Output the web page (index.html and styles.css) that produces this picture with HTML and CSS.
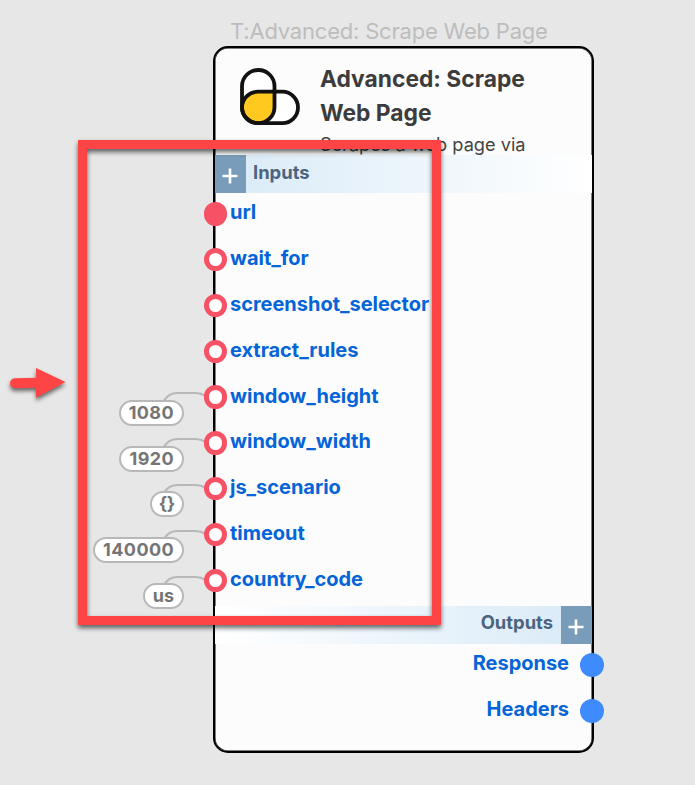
FILE: index.html
```html
<!DOCTYPE html>
<html lang="en">
<head>
<meta charset="utf-8">
<title>Advanced: Scrape Web Page</title>
<link rel="stylesheet" href="styles.css">
</head>
<body>
<main class="canvas">
  <div class="caption"><span>T:Advanced: Scrape Web Page</span></div>
  <section class="node">
    <header class="head">
      <svg class="logo" width="62" height="60" viewBox="0 0 62 60">
        <rect x="3" y="3" width="32.5" height="53" rx="16.25" fill="#fff"/>
        <rect x="3" y="24.7" width="56" height="31.5" rx="15.75" fill="#fff"/>
        <path d="M18.75 24.7H35.5V40A16 16 0 0 1 19.5 56.2H18.75A15.75 15.75 0 0 1 18.75 24.7Z" fill="#ffc91f"/>
        <rect x="3" y="3" width="32.5" height="53.2" rx="16.25" fill="none" stroke="#11110f" stroke-width="3.8"/>
        <rect x="3" y="24.7" width="56" height="31.5" rx="15.75" fill="none" stroke="#11110f" stroke-width="3.8"/>
      </svg>
      <div class="about">
        <h1>Advanced: Scrape<br>Web Page</h1>
        <p><span>Scrapes a web page via</span></p>
      </div>
    </header>
    <div class="band band-in">
      <button class="add"><svg width="16" height="16" viewBox="0 0 16 16"><path d="M.5 8h15M8 .5v15"/></svg></button>
      <h2>Inputs</h2>
    </div>
    <ul class="inputs">
      <li><i class="port filled"></i><span>url</span></li>
      <li><i class="port"></i><span>wait_for</span></li>
      <li><i class="port"></i><span>screenshot_selector</span></li>
      <li><i class="port"></i><span>extract_rules</span></li>
      <li><svg class="wire" width="46" height="16" viewBox="0 0 46 16"><path d="M1 15C6 9 8 5 17 5H34Q40 5 45 8"/></svg><b class="value number">1080</b><i class="port"></i><span>window_height</span></li>
      <li><svg class="wire" width="46" height="16" viewBox="0 0 46 16"><path d="M1 15C6 9 8 5 17 5H34Q40 5 45 8"/></svg><b class="value number">1920</b><i class="port"></i><span>window_width</span></li>
      <li><svg class="wire" width="46" height="16" viewBox="0 0 46 16"><path d="M1 15C6 9 8 5 17 5H34Q40 5 45 8"/></svg><b class="value braces">{}</b><i class="port"></i><span>js_scenario</span></li>
      <li><svg class="wire" width="46" height="16" viewBox="0 0 46 16"><path d="M1 15C6 9 8 5 17 5H34Q40 5 45 8"/></svg><b class="value number">140000</b><i class="port"></i><span>timeout</span></li>
      <li><svg class="wire" width="46" height="16" viewBox="0 0 46 16"><path d="M1 15C6 9 8 5 17 5H34Q40 5 45 8"/></svg><b class="value word">us</b><i class="port"></i><span>country_code</span></li>
    </ul>
    <div class="band band-out">
      <h2>Outputs</h2>
      <button class="add"><svg width="16" height="16" viewBox="0 0 16 16"><path d="M.5 8h15M8 .5v15"/></svg></button>
    </div>
    <ul class="outputs">
      <li><span>Response</span><i class="port"></i></li>
      <li><span>Headers</span><i class="port"></i></li>
    </ul>
  </section>
  <div class="highlight"></div>
  <svg class="arrow" width="70" height="46" viewBox="0 0 70 46">
    <path d="M15 18.2L36 17.8V8L65.5 22L36 37.8V27.8L15 28.2A5 5 0 0 1 15 18.2Z"/>
  </svg>
</main>
</body>
</html>
```
FILE: styles.css
```css
* { box-sizing: border-box; }
body { margin: 0; background: #e7e7e7; font-family: Inter, "Liberation Sans", sans-serif; }
h1, h2, p, ul { margin: 0; padding: 0; }
ul { list-style: none; }
.canvas { position: relative; width: 695px; height: 785px; overflow: hidden; padding: 16px 0 0 213px; }
.caption { height: 29.6px; padding-left: 17px; font-size: 22px; line-height: 30px; font-weight: 400; letter-spacing: -.2px; color: #bdbdbd; white-space: nowrap; }
.node { width: 381px; height: 707px; border: 2px solid #000; border-radius: 15px; background: #fcfcfc; box-shadow: inset 0 0 0 .5px #000; }
.head { display: flex; height: 107px; overflow: hidden; padding-left: 24px; }
.logo { flex: none; margin-top: 19px; }
.about { padding: 14px 0 0 19px; white-space: nowrap; color: #3c3c3c; }
h1 { font-size: 22.8px; line-height: 34px; font-weight: 700; }
p { font-size: 18.2px; line-height: 26px; padding-top: 1px; color: #444; }
.band { display: flex; height: 38px; }
.band-in { background: linear-gradient(90deg, #d8eaf7, #fff); }
.band-out { justify-content: flex-end; background: linear-gradient(90deg, #fff, #d8eaf7); }
.band h2 { padding: 0 8px 0 7px; font-size: 18.4px; line-height: 35px; font-weight: 700; color: #4b6480; }
.band-out h2 { line-height: 33px; }
.add { display: flex; align-items: center; justify-content: center; width: 31px; height: 38px; padding: 4px 1px 0 0; border: 0; background: #789cb9; }
.add path { stroke: #fff; stroke-width: 2.6; }
.inputs { height: 413px; }
li { position: relative; display: flex; align-items: center; height: 45.8px; font-size: 20px; font-weight: 700; letter-spacing: -.02px; color: #0564d8; }
.inputs li { padding-left: 15px; top: -3px; }
.outputs li { justify-content: flex-end; padding-right: 23px; top: -3.4px; }
.port { position: absolute; width: 23.6px; height: 23.4px; top: 12.6px; border-radius: 50%; border: 5px solid #f65164; background: #fff; }
.inputs .port { left: -11.2px; }
.inputs .filled { background: #f65164; }
.outputs .port { right: -12px; width: 24px; height: 24px; border: 0; background: #3d8bfd; }
.wire { position: absolute; left: -54px; top: 15.6px; fill: none; stroke: #b8b8b8; stroke-width: 2.2; }
.value { position: absolute; right: 408px; top: 27px; height: 26px; padding: 0 8px; border: 2px solid #b8b8b8; border-radius: 13px; background: #fff; color: #757575; font-size: 18px; line-height: 21px; font-weight: 700; }
.number { letter-spacing: .4px; }
.braces { padding: 0 7px; letter-spacing: -.3px; line-height: 22px; }
.word { line-height: 22px; }
.highlight { position: absolute; left: 78px; top: 140px; width: 363px; height: 485px; border: 9px solid #fe4444; filter: drop-shadow(0 3px 2.5px rgba(0,0,0,.6)); }
.arrow { position: absolute; left: 0; top: 360px; fill: #fe4444; filter: drop-shadow(0 3px 2px rgba(0,0,0,.55)); }
```
